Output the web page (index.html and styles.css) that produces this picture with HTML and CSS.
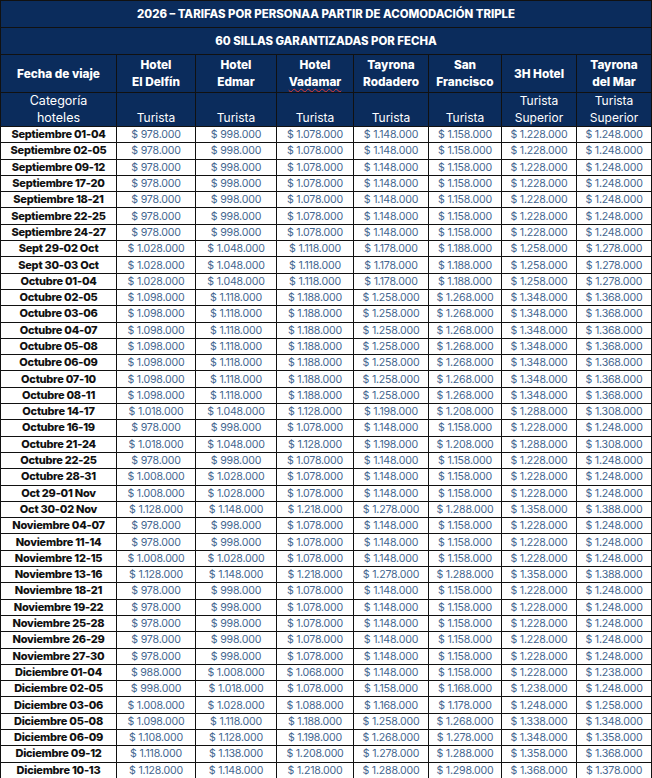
FILE: index.html
```html
<!DOCTYPE html>
<html lang="es">
<head>
<meta charset="utf-8">
<title>Tarifas 2026</title>
<link rel="stylesheet" href="styles.css">
</head>
<body>
<table class="rates">
<colgroup>
<col class="c-date"><col class="c1"><col class="c2"><col class="c3"><col class="c4"><col class="c5"><col class="c6"><col class="c7">
</colgroup>
<thead>
<tr class="h-title"><th colspan="8">2026 – TARIFAS POR PERSONAA PARTIR DE ACOMODACIÓN TRIPLE</th></tr>
<tr class="h-sub"><th colspan="8">60 SILLAS GARANTIZADAS POR FECHA</th></tr>
<tr class="h-hotels">
<th>Fecha de viaje</th>
<th>Hotel<br>El Delfín</th>
<th>Hotel<br>Edmar</th>
<th>Hotel<br><span class="spell">Vadamar</span></th>
<th>Tayrona<br>Rodadero</th>
<th>San<br>Francisco</th>
<th>3H Hotel</th>
<th>Tayrona<br>del Mar</th>
</tr>
<tr class="h-cat">
<th class="cat-label">Categoría<br>hoteles</th>
<th>Turista</th>
<th>Turista</th>
<th>Turista</th>
<th>Turista</th>
<th>Turista</th>
<th>Turista<br>Superior</th>
<th>Turista<br>Superior</th>
</tr>
</thead>
<tbody>
<tr><th>Septiembre 01-04</th><td>$ 978.000</td><td>$ 998.000</td><td>$ 1.078.000</td><td>$ 1.148.000</td><td>$ 1.158.000</td><td>$ 1.228.000</td><td>$ 1.248.000</td></tr>
<tr><th>Septiembre 02-05</th><td>$ 978.000</td><td>$ 998.000</td><td>$ 1.078.000</td><td>$ 1.148.000</td><td>$ 1.158.000</td><td>$ 1.228.000</td><td>$ 1.248.000</td></tr>
<tr><th>Septiembre 09-12</th><td>$ 978.000</td><td>$ 998.000</td><td>$ 1.078.000</td><td>$ 1.148.000</td><td>$ 1.158.000</td><td>$ 1.228.000</td><td>$ 1.248.000</td></tr>
<tr><th>Septiembre 17-20</th><td>$ 978.000</td><td>$ 998.000</td><td>$ 1.078.000</td><td>$ 1.148.000</td><td>$ 1.158.000</td><td>$ 1.228.000</td><td>$ 1.248.000</td></tr>
<tr><th>Septiembre 18-21</th><td>$ 978.000</td><td>$ 998.000</td><td>$ 1.078.000</td><td>$ 1.148.000</td><td>$ 1.158.000</td><td>$ 1.228.000</td><td>$ 1.248.000</td></tr>
<tr><th>Septiembre 22-25</th><td>$ 978.000</td><td>$ 998.000</td><td>$ 1.078.000</td><td>$ 1.148.000</td><td>$ 1.158.000</td><td>$ 1.228.000</td><td>$ 1.248.000</td></tr>
<tr><th>Septiembre 24-27</th><td>$ 978.000</td><td>$ 998.000</td><td>$ 1.078.000</td><td>$ 1.148.000</td><td>$ 1.158.000</td><td>$ 1.228.000</td><td>$ 1.248.000</td></tr>
<tr><th>Sept 29-02 Oct</th><td>$ 1.028.000</td><td>$ 1.048.000</td><td>$ 1.118.000</td><td>$ 1.178.000</td><td>$ 1.188.000</td><td>$ 1.258.000</td><td>$ 1.278.000</td></tr>
<tr><th>Sept 30-03 Oct</th><td>$ 1.028.000</td><td>$ 1.048.000</td><td>$ 1.118.000</td><td>$ 1.178.000</td><td>$ 1.188.000</td><td>$ 1.258.000</td><td>$ 1.278.000</td></tr>
<tr><th>Octubre 01-04</th><td>$ 1.028.000</td><td>$ 1.048.000</td><td>$ 1.118.000</td><td>$ 1.178.000</td><td>$ 1.188.000</td><td>$ 1.258.000</td><td>$ 1.278.000</td></tr>
<tr><th>Octubre 02-05</th><td>$ 1.098.000</td><td>$ 1.118.000</td><td>$ 1.188.000</td><td>$ 1.258.000</td><td>$ 1.268.000</td><td>$ 1.348.000</td><td>$ 1.368.000</td></tr>
<tr><th>Octubre 03-06</th><td>$ 1.098.000</td><td>$ 1.118.000</td><td>$ 1.188.000</td><td>$ 1.258.000</td><td>$ 1.268.000</td><td>$ 1.348.000</td><td>$ 1.368.000</td></tr>
<tr><th>Octubre 04-07</th><td>$ 1.098.000</td><td>$ 1.118.000</td><td>$ 1.188.000</td><td>$ 1.258.000</td><td>$ 1.268.000</td><td>$ 1.348.000</td><td>$ 1.368.000</td></tr>
<tr><th>Octubre 05-08</th><td>$ 1.098.000</td><td>$ 1.118.000</td><td>$ 1.188.000</td><td>$ 1.258.000</td><td>$ 1.268.000</td><td>$ 1.348.000</td><td>$ 1.368.000</td></tr>
<tr><th>Octubre 06-09</th><td>$ 1.098.000</td><td>$ 1.118.000</td><td>$ 1.188.000</td><td>$ 1.258.000</td><td>$ 1.268.000</td><td>$ 1.348.000</td><td>$ 1.368.000</td></tr>
<tr><th>Octubre 07-10</th><td>$ 1.098.000</td><td>$ 1.118.000</td><td>$ 1.188.000</td><td>$ 1.258.000</td><td>$ 1.268.000</td><td>$ 1.348.000</td><td>$ 1.368.000</td></tr>
<tr><th>Octubre 08-11</th><td>$ 1.098.000</td><td>$ 1.118.000</td><td>$ 1.188.000</td><td>$ 1.258.000</td><td>$ 1.268.000</td><td>$ 1.348.000</td><td>$ 1.368.000</td></tr>
<tr><th>Octubre 14-17</th><td>$ 1.018.000</td><td>$ 1.048.000</td><td>$ 1.128.000</td><td>$ 1.198.000</td><td>$ 1.208.000</td><td>$ 1.288.000</td><td>$ 1.308.000</td></tr>
<tr><th>Octubre 16-19</th><td>$ 978.000</td><td>$ 998.000</td><td>$ 1.078.000</td><td>$ 1.148.000</td><td>$ 1.158.000</td><td>$ 1.228.000</td><td>$ 1.248.000</td></tr>
<tr><th>Octubre 21-24</th><td>$ 1.018.000</td><td>$ 1.048.000</td><td>$ 1.128.000</td><td>$ 1.198.000</td><td>$ 1.208.000</td><td>$ 1.288.000</td><td>$ 1.308.000</td></tr>
<tr><th>Octubre 22-25</th><td>$ 978.000</td><td>$ 998.000</td><td>$ 1.078.000</td><td>$ 1.148.000</td><td>$ 1.158.000</td><td>$ 1.228.000</td><td>$ 1.248.000</td></tr>
<tr><th>Octubre 28-31</th><td>$ 1.008.000</td><td>$ 1.028.000</td><td>$ 1.078.000</td><td>$ 1.148.000</td><td>$ 1.158.000</td><td>$ 1.228.000</td><td>$ 1.248.000</td></tr>
<tr><th>Oct 29-01 Nov</th><td>$ 1.008.000</td><td>$ 1.028.000</td><td>$ 1.078.000</td><td>$ 1.148.000</td><td>$ 1.158.000</td><td>$ 1.228.000</td><td>$ 1.248.000</td></tr>
<tr><th>Oct 30-02 Nov</th><td>$ 1.128.000</td><td>$ 1.148.000</td><td>$ 1.218.000</td><td>$ 1.278.000</td><td>$ 1.288.000</td><td>$ 1.358.000</td><td>$ 1.388.000</td></tr>
<tr><th>Noviembre 04-07</th><td>$ 978.000</td><td>$ 998.000</td><td>$ 1.078.000</td><td>$ 1.148.000</td><td>$ 1.158.000</td><td>$ 1.228.000</td><td>$ 1.248.000</td></tr>
<tr><th>Noviembre 11-14</th><td>$ 978.000</td><td>$ 998.000</td><td>$ 1.078.000</td><td>$ 1.148.000</td><td>$ 1.158.000</td><td>$ 1.228.000</td><td>$ 1.248.000</td></tr>
<tr><th>Noviembre 12-15</th><td>$ 1.008.000</td><td>$ 1.028.000</td><td>$ 1.078.000</td><td>$ 1.148.000</td><td>$ 1.158.000</td><td>$ 1.228.000</td><td>$ 1.248.000</td></tr>
<tr><th>Noviembre 13-16</th><td>$ 1.128.000</td><td>$ 1.148.000</td><td>$ 1.218.000</td><td>$ 1.278.000</td><td>$ 1.288.000</td><td>$ 1.358.000</td><td>$ 1.388.000</td></tr>
<tr><th>Noviembre 18-21</th><td>$ 978.000</td><td>$ 998.000</td><td>$ 1.078.000</td><td>$ 1.148.000</td><td>$ 1.158.000</td><td>$ 1.228.000</td><td>$ 1.248.000</td></tr>
<tr><th>Noviembre 19-22</th><td>$ 978.000</td><td>$ 998.000</td><td>$ 1.078.000</td><td>$ 1.148.000</td><td>$ 1.158.000</td><td>$ 1.228.000</td><td>$ 1.248.000</td></tr>
<tr><th>Noviembre 25-28</th><td>$ 978.000</td><td>$ 998.000</td><td>$ 1.078.000</td><td>$ 1.148.000</td><td>$ 1.158.000</td><td>$ 1.228.000</td><td>$ 1.248.000</td></tr>
<tr><th>Noviembre 26-29</th><td>$ 978.000</td><td>$ 998.000</td><td>$ 1.078.000</td><td>$ 1.148.000</td><td>$ 1.158.000</td><td>$ 1.228.000</td><td>$ 1.248.000</td></tr>
<tr><th>Noviembre 27-30</th><td>$ 978.000</td><td>$ 998.000</td><td>$ 1.078.000</td><td>$ 1.148.000</td><td>$ 1.158.000</td><td>$ 1.228.000</td><td>$ 1.248.000</td></tr>
<tr><th>Diciembre 01-04</th><td>$ 988.000</td><td>$ 1.008.000</td><td>$ 1.068.000</td><td>$ 1.148.000</td><td>$ 1.158.000</td><td>$ 1.228.000</td><td>$ 1.238.000</td></tr>
<tr><th>Diciembre 02-05</th><td>$ 998.000</td><td>$ 1.018.000</td><td>$ 1.078.000</td><td>$ 1.158.000</td><td>$ 1.168.000</td><td>$ 1.238.000</td><td>$ 1.248.000</td></tr>
<tr><th>Diciembre 03-06</th><td>$ 1.008.000</td><td>$ 1.028.000</td><td>$ 1.088.000</td><td>$ 1.168.000</td><td>$ 1.178.000</td><td>$ 1.248.000</td><td>$ 1.258.000</td></tr>
<tr><th>Diciembre 05-08</th><td>$ 1.098.000</td><td>$ 1.118.000</td><td>$ 1.188.000</td><td>$ 1.258.000</td><td>$ 1.268.000</td><td>$ 1.338.000</td><td>$ 1.348.000</td></tr>
<tr><th>Diciembre 06-09</th><td>$ 1.108.000</td><td>$ 1.128.000</td><td>$ 1.198.000</td><td>$ 1.268.000</td><td>$ 1.278.000</td><td>$ 1.348.000</td><td>$ 1.358.000</td></tr>
<tr><th>Diciembre 09-12</th><td>$ 1.118.000</td><td>$ 1.138.000</td><td>$ 1.208.000</td><td>$ 1.278.000</td><td>$ 1.288.000</td><td>$ 1.358.000</td><td>$ 1.368.000</td></tr>
<tr><th>Diciembre 10-13</th><td>$ 1.128.000</td><td>$ 1.148.000</td><td>$ 1.218.000</td><td>$ 1.288.000</td><td>$ 1.298.000</td><td>$ 1.368.000</td><td>$ 1.378.000</td></tr>
</tbody>
</table>
</body>
</html>
```
FILE: styles.css
```css
html, body {
  margin: 0;
  padding: 0;
  background: #ffffff;
}

body {
  font-family: "Inter", "Noto Sans", "Liberation Sans", sans-serif;
}

.rates {
  width: 651px;
  table-layout: fixed;
  border-collapse: collapse;
  border: 1px solid #111111;
}

.c-date { width: 116px; }
.c1 { width: 79px; }
.c2 { width: 81px; }
.c3 { width: 77px; }
.c4 { width: 75px; }
.c5 { width: 73px; }
.c6 { width: 75px; }
.c7 { width: 75px; }

.rates th,
.rates td {
  border: 1px solid #111111;
  padding: 0;
  text-align: center;
  white-space: nowrap;
  overflow: hidden;
}

.rates thead th {
  background: #0b2c5c;
  color: #ffffff;
}

.h-title th,
.h-sub th {
  height: 26px;
  font-size: 11.4px;
  font-weight: 800;
}

.h-hotels th {
  height: 36px;
  font-size: 11.8px;
  font-weight: 800;
  line-height: 17px;
  vertical-align: middle;
  padding-top: 1px;
}

.h-cat th {
  height: 33px;
  font-size: 12px;
  font-weight: 400;
  line-height: 16.5px;
  vertical-align: bottom;
  padding-bottom: 0;
}

.h-cat .cat-label {
  vertical-align: middle;
  font-size: 12.5px;
}

.spell {
  text-decoration: underline wavy #e2393b;
  text-decoration-thickness: 1px;
  text-underline-offset: 2px;
}

.rates tbody tr {
  height: 16.3px;
}

.rates tbody th {
  font-size: 11px;
  font-weight: 800;
  color: #111111;
  line-height: 15px;
  letter-spacing: -0.25px;
}

.rates tbody td {
  font-size: 10.6px;
  font-weight: 400;
  color: #44668f;
  line-height: 15px;
  letter-spacing: -0.2px;
}
```
